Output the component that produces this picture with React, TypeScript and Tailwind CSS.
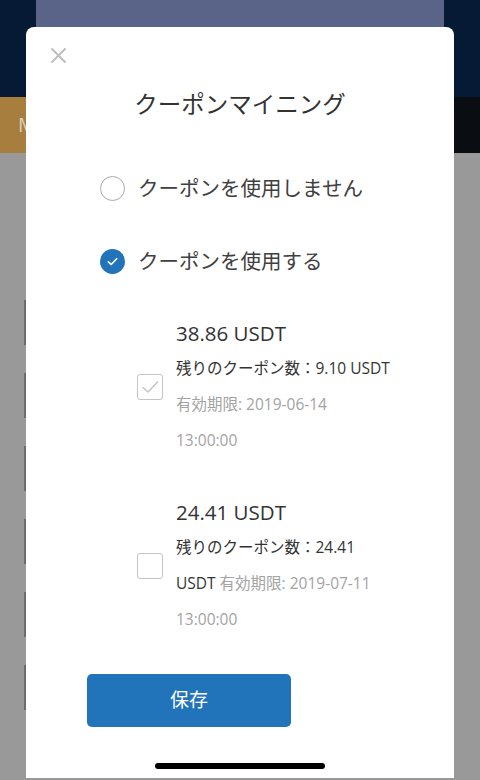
import { useState } from "react";

const font = { fontFamily: '"Open Sans", "Noto Sans CJK JP", sans-serif' };

const Radio = ({ checked, label, onClick }: { checked: boolean; label: string; onClick: () => void }) => (
  <button onClick={onClick} className="flex h-[40px] items-center gap-[13px] text-left">
    {checked ? (
      <span className="flex h-[25px] w-[25px] items-center justify-center rounded-full bg-[#2173ba]">
        <svg width="13" height="13" viewBox="0 0 14 14" fill="none">
          <path d="M2.5 7.3 L5.6 10.2 L11.5 4" stroke="#fff" strokeWidth="1.8" strokeLinecap="round" strokeLinejoin="round" />
        </svg>
      </span>
    ) : (
      <span className="h-[25px] w-[25px] rounded-full border-[1.5px] border-[#a9a9a9]" />
    )}
    <span className="text-[20.5px] leading-[40px] text-[#404040]">{label}</span>
  </button>
);

const Checkbox = ({ checked }: { checked: boolean }) => (
  <span className="flex h-[26px] w-[26px] shrink-0 items-center justify-center rounded-[3px] border-[1.5px] border-[#c4c4c4]">
    {checked && (
      <svg width="20" height="20" viewBox="0 0 20 20" fill="none">
        <path d="M3 10.5 L8 15 L17.5 5" stroke="#c4c4c4" strokeWidth="1.5" strokeLinecap="round" strokeLinejoin="round" />
      </svg>
    )}
  </span>
);

const App = () => {
  const [useCoupon, setUseCoupon] = useState(true);

  return (
    <div className="relative h-[780px] w-[480px] overflow-hidden bg-[#999999]" style={font}>
      {/* page behind the dialog */}
      <div className="h-[97px] bg-[#061a35] px-[36px]">
        <div className="h-[40px] bg-[#5a6488]" />
      </div>
      <div className="flex h-[56px]">
        <div className="flex w-1/2 items-center bg-[#a87e3f] pl-[18px] text-[20px] text-[#d8d0c0]">Mining</div>
        <div className="w-1/2 bg-[#0a0e12]" />
      </div>
      <div className="flex flex-col gap-[28px] pl-[24px] pt-[147px]">
        {[0, 1, 2, 3, 4, 5].map((i) => (
          <div key={i} className="h-[45px] w-[2px] bg-[#6c6c6c]" />
        ))}
      </div>

      {/* dialog */}
      <div className="absolute left-[26px] top-[27px] flex h-[751px] w-[428px] flex-col rounded-t-[8px] bg-white">
        <div className="px-[25px] pt-[21px]">
          <svg width="15" height="15" viewBox="0 0 15 15" fill="none">
            <path d="M1 1 L14 14 M14 1 L1 14" stroke="#bcbcbc" strokeWidth="1.8" strokeLinecap="round" />
          </svg>
        </div>
        <h1 className="mt-[25px] h-[32px] text-center text-[23.5px] leading-[32px] text-[#333]">クーポンマイニング</h1>

        <div className="mt-[48px] flex flex-col gap-[33px] pl-[74px]">
          <Radio checked={!useCoupon} label="クーポンを使用しません" onClick={() => setUseCoupon(false)} />
          <Radio checked={useCoupon} label="クーポンを使用する" onClick={() => setUseCoupon(true)} />
        </div>

        <div className="mt-[35px] flex flex-col gap-[37px] pl-[111px]">
          <div className="flex items-center gap-[13px]">
            <Checkbox checked />
            <div className="text-[15.5px] leading-[36px] text-[#333]">
              <div className="text-[20.5px] leading-[34px]">38.86 USDT</div>
              <div className="whitespace-nowrap">残りのクーポン数：9.10 USDT</div>
              <div className="whitespace-nowrap text-[#a3a3a3]">有効期限: 2019-06-14</div>
              <div className="text-[#a3a3a3]">13:00:00</div>
            </div>
          </div>
          <div className="flex items-center gap-[13px]">
            <Checkbox checked={false} />
            <div className="text-[15.5px] leading-[36px] text-[#333]">
              <div className="text-[20.5px] leading-[34px]">24.41 USDT</div>
              <div className="whitespace-nowrap">残りのクーポン数：24.41</div>
              <div className="whitespace-nowrap">
                USDT <span className="text-[#a3a3a3]">有効期限: 2019-07-11</span>
              </div>
              <div className="text-[#a3a3a3]">13:00:00</div>
            </div>
          </div>
        </div>

        <button className="ml-[61px] mt-[37px] h-[53px] w-[204px] rounded-[5px] bg-[#2173ba] text-[19px] text-white">
          保存
        </button>

        <div className="mx-auto mt-[36px] h-[6px] w-[170px] rounded-full bg-black" />
      </div>
    </div>
  );
};

export default App;
